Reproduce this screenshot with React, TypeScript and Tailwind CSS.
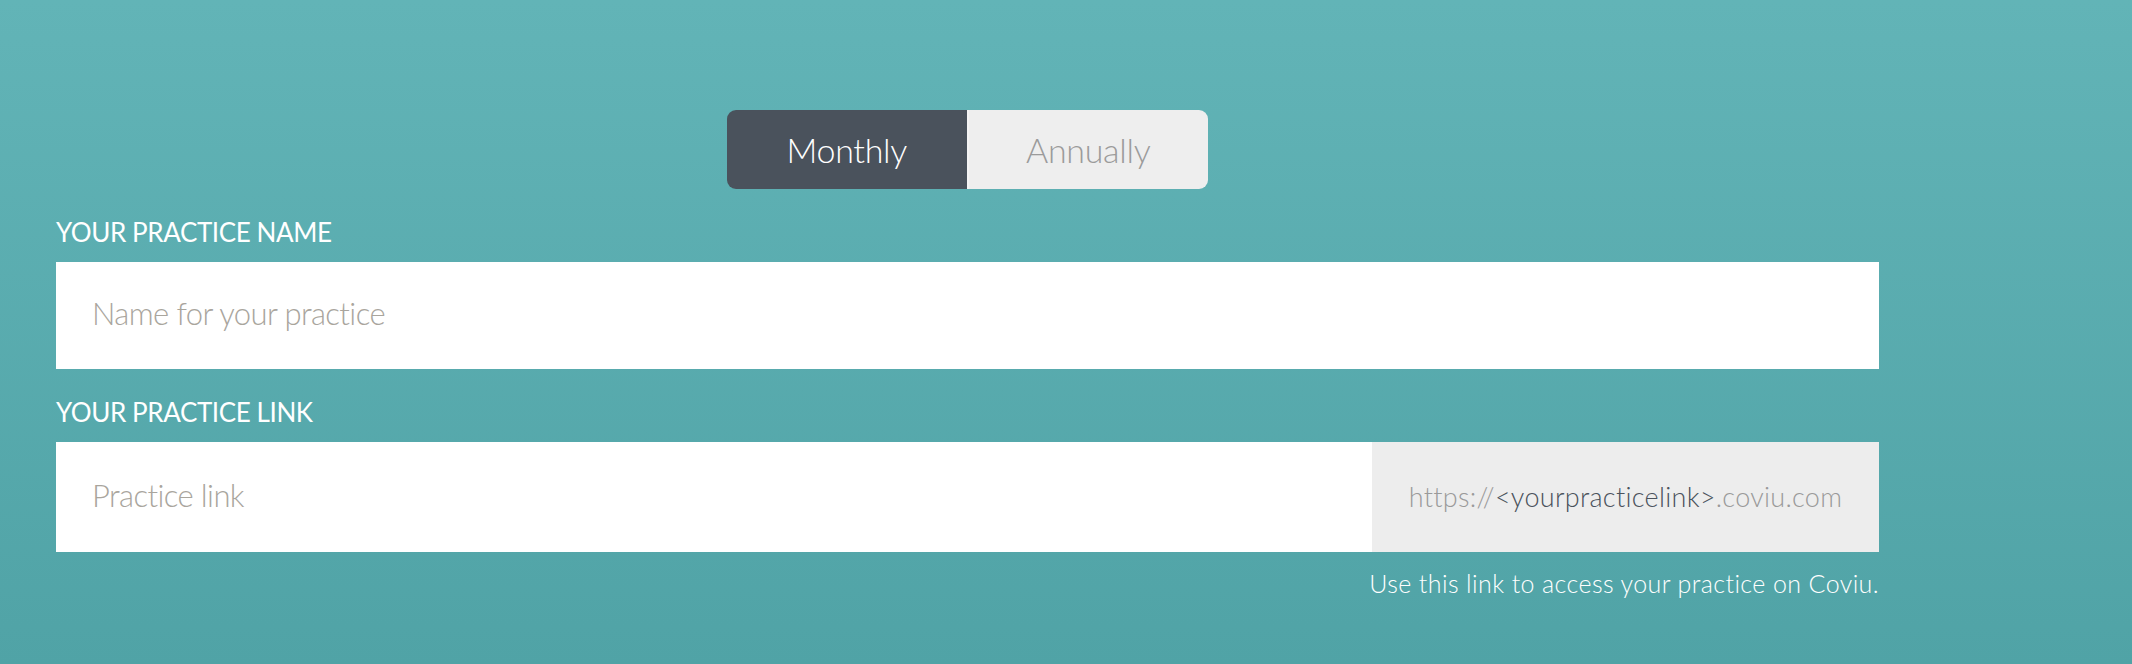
import { useState } from "react";

type Plan = "monthly" | "annually";

function PlanToggle() {
  const [plan, setPlan] = useState<Plan>("monthly");

  return (
    <div className="flex justify-center">
      <div className="flex h-[79px] w-[481px] overflow-hidden rounded-[9px]">
        <button
          onClick={() => setPlan("monthly")}
          className={`flex-1 text-[34px] font-light tracking-[-0.3px] ${
            plan === "monthly" ? "bg-[#4a525c] text-white" : "bg-[#eeeeee] text-[#9b9b9b]"
          }`}
        >
          Monthly
        </button>
        <div className="w-[2px] bg-[#f4f4f4]" />
        <button
          onClick={() => setPlan("annually")}
          className={`flex-1 text-[34px] font-light tracking-[-0.3px] ${
            plan === "annually" ? "bg-[#4a525c] text-white" : "bg-[#eeeeee] text-[#9b9b9b]"
          }`}
        >
          Annually
        </button>
      </div>
    </div>
  );
}

export default function App() {
  return (
    <div
      className="h-[664px] bg-linear-to-b from-[#62b4b7] to-[#50a3a6] pt-[110px]"
      style={{ fontFamily: "Lato, 'Open Sans', sans-serif" }}
    >
      <div className="ml-[56px] w-[1823px]">
        <PlanToggle />

        <label className="mt-[28px] block text-[26px] leading-[30px] tracking-[-0.4px] text-white">
          YOUR PRACTICE NAME
        </label>
        <input
          type="text"
          placeholder="Name for your practice"
          className="mt-[15px] block h-[107px] w-full bg-white px-[36px] pb-[5px] text-[31px] font-light tracking-[-0.6px] text-[#4a525c] outline-none placeholder:text-[#a9a59d]"
        />

        <label className="mt-[28px] block text-[26px] leading-[30px] tracking-[-0.4px] text-white">
          YOUR PRACTICE LINK
        </label>
        <div className="mt-[15px] flex h-[110px] w-full">
          <input
            type="text"
            placeholder="Practice link"
            className="h-full flex-1 bg-white px-[36px] pb-[5px] text-[31px] font-light tracking-[-0.6px] text-[#4a525c] outline-none placeholder:text-[#a9a59d]"
          />
          <div className="flex w-[507px] items-center justify-center bg-[#ededed] text-[27px] font-light tracking-[0.3px] text-[#9a9a9a]">
            https://<span className="text-[#4a525c]">&lt;yourpracticelink&gt;</span>.coviu.com
          </div>
        </div>
        <p className="mt-[16px] text-right text-[25px] font-light leading-[30px] tracking-[0.4px] text-white">
          Use this link to access your practice on Coviu.
        </p>
      </div>
    </div>
  );
}
